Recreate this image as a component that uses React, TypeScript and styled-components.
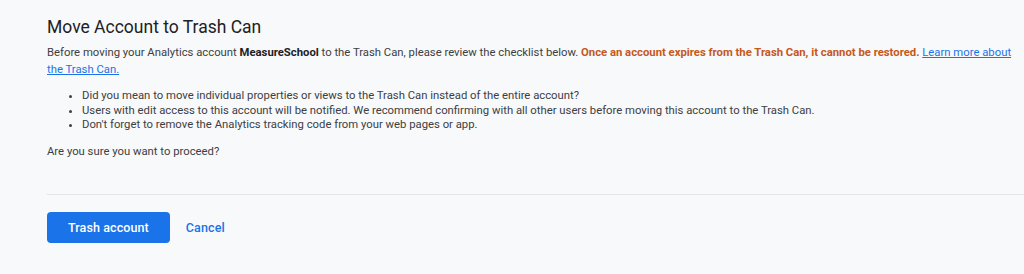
import styled, { createGlobalStyle } from "styled-components";

const GlobalStyle = createGlobalStyle`
  html, body {
    margin: 0;
    padding: 0;
    background-color: #f8f9fa;
  }
  body {
    font-family: Roboto, "Liberation Sans", Arial, sans-serif;
    color: #3c4043;
  }
`;

const Page = styled.div`
  padding: 15px 0 0 47px;
  min-height: 274px;
  box-sizing: border-box;
`;

const Content = styled.div`
  padding-right: 10px;
`;

const Title = styled.h1`
  margin: 0;
  font-size: 17.5px;
  font-weight: 400;
  line-height: 24px;
  color: #202124;
`;

const Intro = styled.p`
  margin: 5px 0 0;
  font-size: 11.3px;
  line-height: 17px;
`;

const Strong = styled.b`
  font-weight: 700;
  color: #202124;
`;

const Warning = styled.b`
  font-weight: 700;
  color: #c5581c;
`;

const Link = styled.a`
  color: #1a73e8;
  text-decoration: underline;
  cursor: pointer;
`;

const Checklist = styled.ul`
  margin: 11px 0 0;
  padding-left: 35px;
  font-size: 11.3px;
  line-height: 14.5px;
`;

const Question = styled.p`
  margin: 10px 0 0;
  font-size: 11.3px;
  line-height: 17px;
`;

const Divider = styled.hr`
  margin: 34px 0 0;
  border: 0;
  border-top: 1px solid #e3e5e8;
`;

const Actions = styled.div`
  display: flex;
  align-items: center;
  gap: 16px;
  margin-top: 17px;
`;

const Button = styled.button<{ $primary?: boolean }>`
  height: 31px;
  padding: 0 ${(p) => (p.$primary ? "21px" : "0")};
  border: 0;
  border-radius: 4px;
  font-family: inherit;
  font-size: 12.5px;
  font-weight: 500;
  letter-spacing: 0.1px;
  cursor: pointer;
  background-color: ${(p) => (p.$primary ? "#1a73e8" : "transparent")};
  color: ${(p) => (p.$primary ? "#ffffff" : "#1a73e8")};
`;

export default function App() {
  return (
    <>
      <GlobalStyle />
      <Page>
        <Content>
          <Title>Move Account to Trash Can</Title>
          <Intro>
            Before moving your Analytics account <Strong>MeasureSchool</Strong> to the Trash Can,
            please review the checklist below.{" "}
            <Warning>Once an account expires from the Trash Can, it cannot be restored.</Warning>{" "}
            <Link>Learn more about the Trash Can.</Link>
          </Intro>
          <Checklist>
            <li>Did you mean to move individual properties or views to the Trash Can instead of the entire account?</li>
            <li>
              Users with edit access to this account will be notified. We recommend confirming with all other users
              before moving this account to the Trash Can.
            </li>
            <li>Don't forget to remove the Analytics tracking code from your web pages or app.</li>
          </Checklist>
          <Question>Are you sure you want to proceed?</Question>
        </Content>
        <Divider />
        <Actions>
          <Button $primary>Trash account</Button>
          <Button>Cancel</Button>
        </Actions>
      </Page>
    </>
  );
}
